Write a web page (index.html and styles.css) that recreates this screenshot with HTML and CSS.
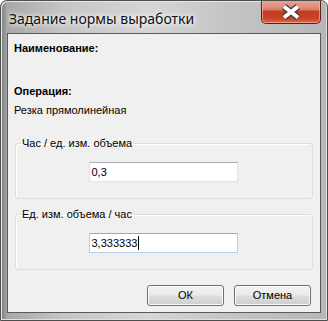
FILE: index.html
```html
<!DOCTYPE html>
<html lang="ru">
<head>
<meta charset="utf-8">
<title>Задание нормы выработки</title>
<link rel="stylesheet" href="styles.css">
</head>
<body>
<div class="window">
  <div class="titlebar">
    <span class="title">Задание нормы выработки</span>
    <div class="close">
      <svg width="24" height="16" viewBox="0 0 24 16">
        <path d="M5 2.5 L19 13.5 M19 2.5 L5 13.5" stroke="#3b3b3b" stroke-width="6.4" fill="none"/>
        <path d="M5 2.5 L19 13.5 M19 2.5 L5 13.5" stroke="#ffffff" stroke-width="4" fill="none"/>
      </svg>
    </div>
  </div>
  <div class="client">
    <div class="info">
      <div class="line bold">Наименование:</div>
      <div class="line bold op">Операция:</div>
      <div class="line name">Резка прямолинейная</div>
    </div>
    <fieldset class="group first">
      <legend>Час / ед. изм. объема</legend>
      <div class="field">0,3</div>
    </fieldset>
    <fieldset class="group second">
      <legend>Ед. изм. объема / час</legend>
      <div class="field focus">3,333333<span class="caret"></span></div>
    </fieldset>
    <div class="buttons">
      <div class="btn">ОК</div>
      <div class="btn">Отмена</div>
    </div>
  </div>
</div>
</body>
</html>
```
FILE: styles.css
```css
html, body {
  margin: 0;
  padding: 0;
  background: #ffffff;
}
.window {
  width: 326px;
  height: 319px;
  border: 1px solid #4e4e4e;
  border-radius: 7px 7px 0 0;
  background:
    linear-gradient(to right, #7d7d7d 0, #a9a9a9 2%, #c6c6c6 20%, #d6d6d6 45%, #c4c4c4 70%, #b7b7b7 100%);
  box-shadow: inset 1px 1px 0 #e8e8e8, inset -1px -1px 0 #e0e0e0;
  display: flex;
  flex-direction: column;
  overflow: hidden;
}
.titlebar {
  height: 32px;
  display: flex;
  justify-content: space-between;
  align-items: flex-start;
}
.title {
  font-family: "Noto Sans", "Open Sans", sans-serif;
  font-size: 14px;
  line-height: 20px;
  color: #111;
  padding: 8px 0 0 8px;
  text-shadow: 0 0 6px #fff, 0 0 4px #fff;
}
.close {
  width: 58px;
  height: 23px;
  margin: -1px 6px 0 0;
  border: 1px solid #5a2217;
  border-top: none;
  border-radius: 0 0 5px 5px;
  background: linear-gradient(to bottom, #e9a797 0, #dc8470 40%, #c43d22 50%, #c9432a 80%, #e2694a 100%);
  box-shadow: inset 0 0 0 1px rgba(255, 200, 185, 0.55);
  display: flex;
  align-items: center;
  justify-content: center;
}
.client {
  flex: 1;
  margin: 0 6px 7px 6px;
  border: 1px solid #5a5a5a;
  background: #f0f0f0;
  display: flex;
  flex-direction: column;
  font-family: "Liberation Sans", Arial, sans-serif;
  font-size: 11px;
  color: #000;
}
.info {
  padding: 8px 0 0 6px;
}
.line {
  line-height: 13px;
}
.bold {
  font-weight: bold;
}
.op {
  margin-top: 30px;
}
.name {
  margin-top: 6px;
}
.group {
  margin: 0 7px;
  padding: 0 0 16px 0;
  border: 1px solid #d5dfe5;
  border-radius: 3px;
  box-shadow: inset 1px 1px 0 #fff;
}
.group.first {
  margin-top: 19px;
}
.group.second {
  margin-top: 8px;
}
.group legend {
  margin-left: 5px;
  padding: 0 1px;
  line-height: 14px;
  font-size: 11px;
}
.field {
  width: 143px;
  height: 18px;
  margin: 12px auto 0 auto;
  padding: 0 2px;
  background: #fff;
  border: 1px solid #e2e3ea;
  border-top-color: #abadb3;
  line-height: 18px;
  font-size: 11px;
  display: flex;
  align-items: center;
  position: relative;
  left: -1px;
}
.field.focus {
  border-color: #7fb1e0 #b5d0eb #b5d0eb #b5d0eb;
}
.caret {
  width: 1px;
  height: 14px;
  background: #000;
  margin-left: 1px;
}
.buttons {
  display: flex;
  justify-content: flex-end;
  gap: 10px;
  margin-top: 15px;
  padding-right: 9px;
}
.btn {
  width: 75px;
  height: 19px;
  border: 1px solid #707070;
  border-radius: 3px;
  background: linear-gradient(to bottom, #f2f2f2 0, #ebebeb 48%, #dddddd 52%, #cfcfcf 100%);
  box-shadow: inset 0 0 0 1px #fcfcfc;
  text-align: center;
  line-height: 19px;
  font-size: 11px;
}
```
